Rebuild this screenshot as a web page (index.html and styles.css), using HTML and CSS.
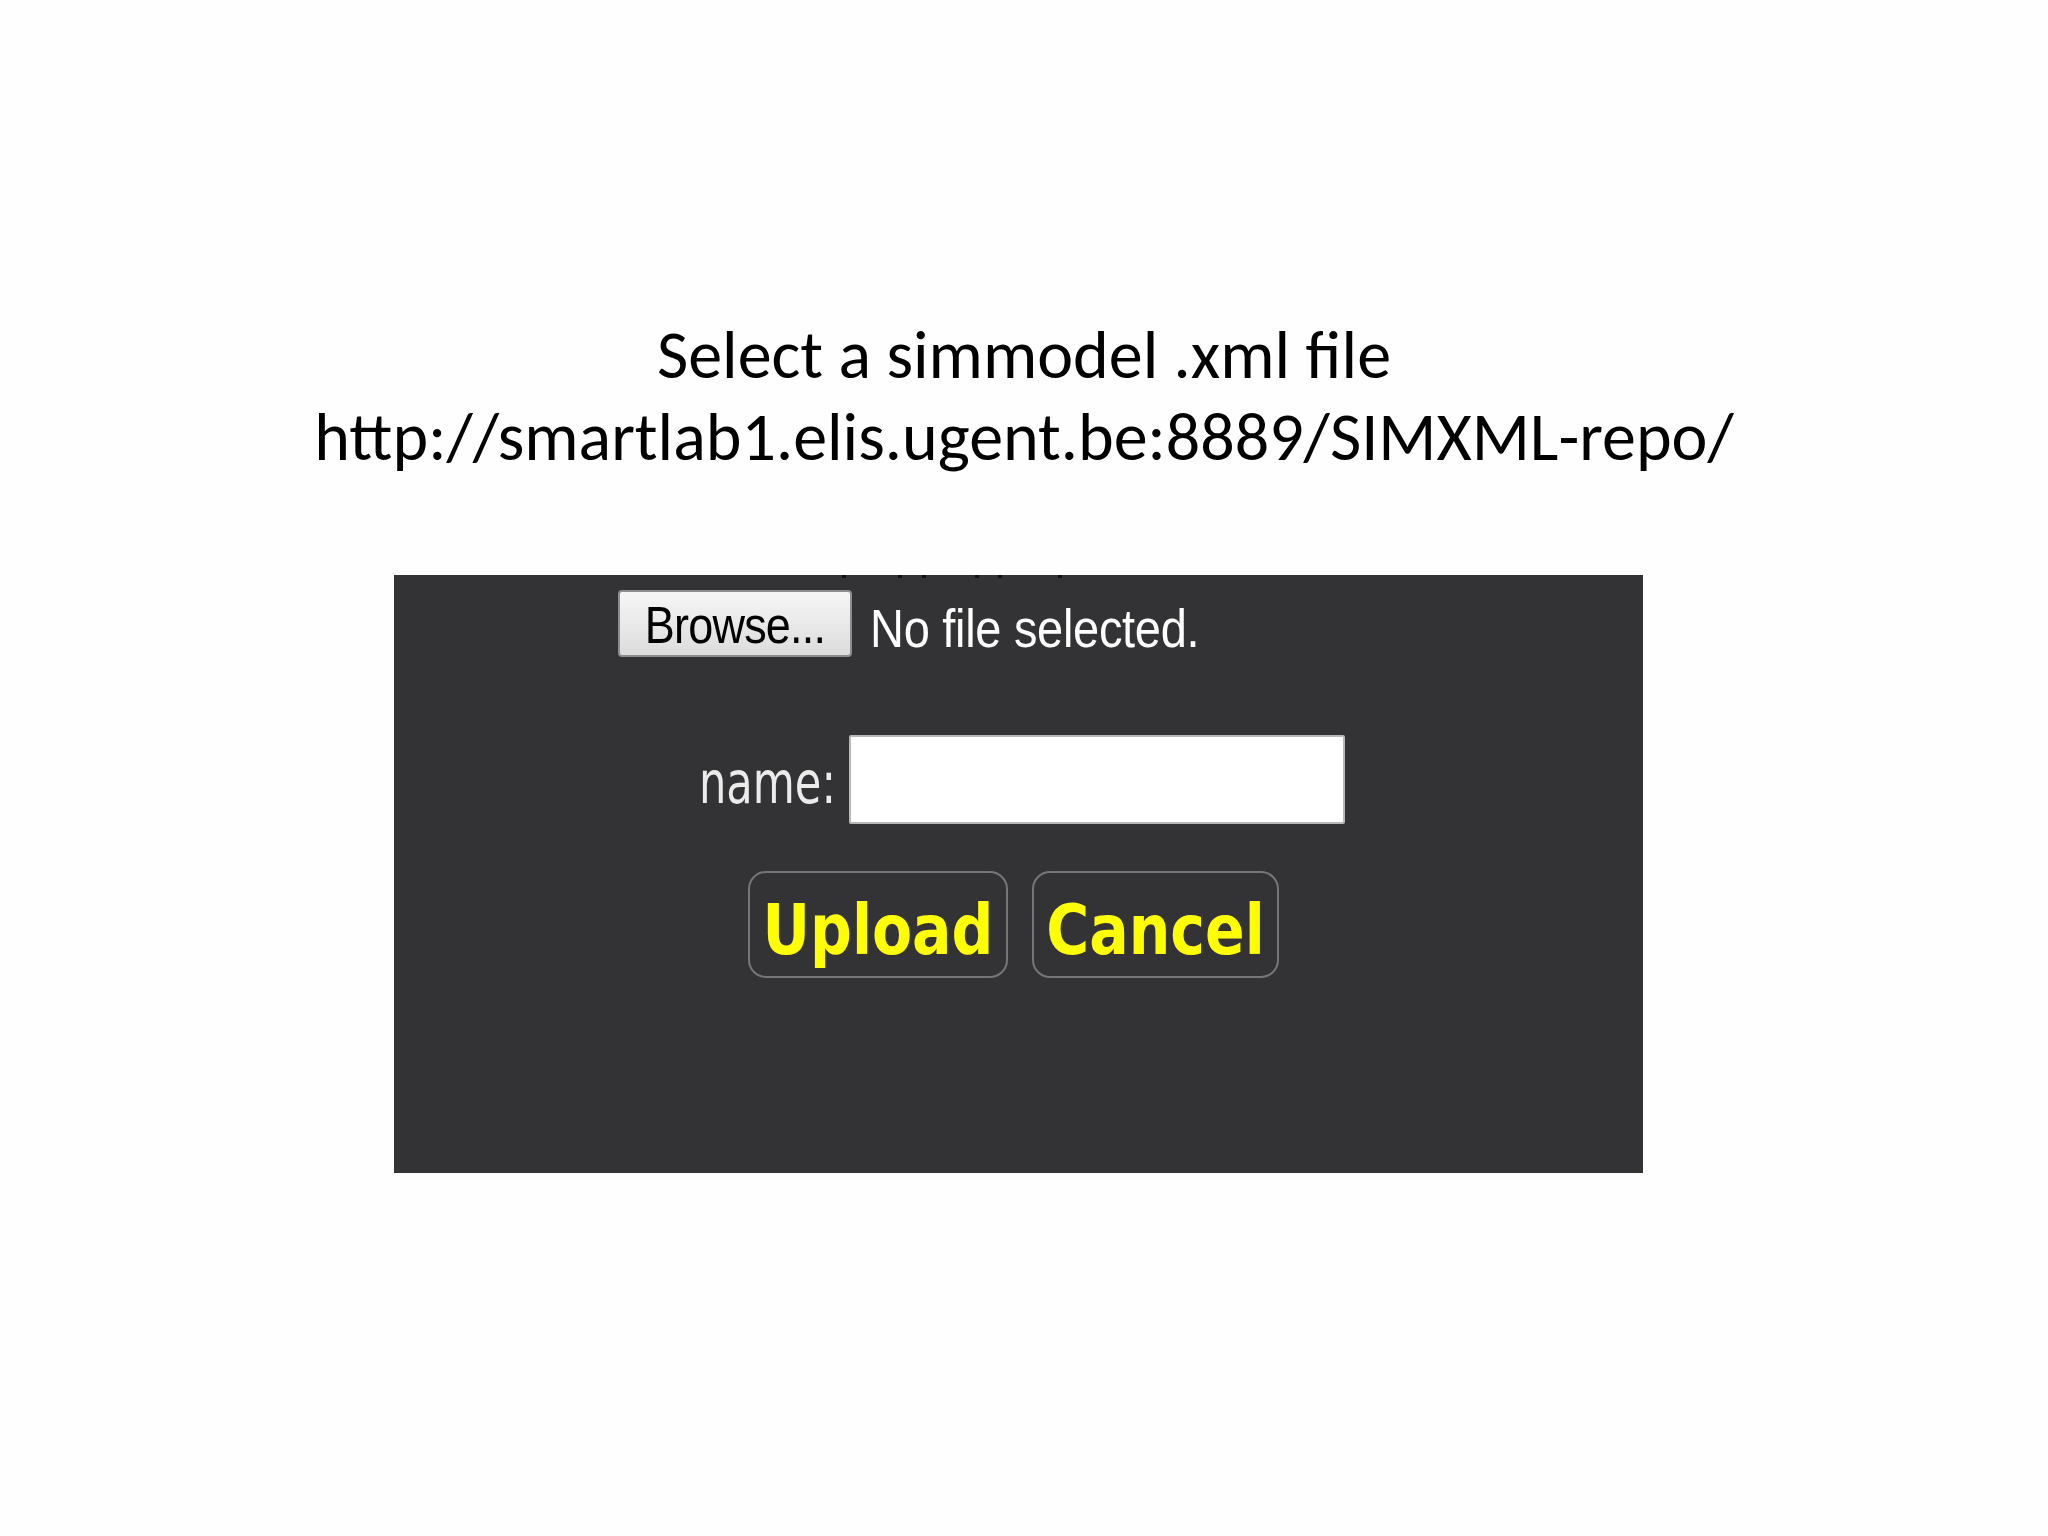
FILE: index.html
```html
<!DOCTYPE html>
<html lang="en">
<head>
<meta charset="utf-8">
<title>Select a simmodel .xml file</title>
<link rel="stylesheet" href="styles.css">
</head>
<body>
<main class="slide">
  <h1 class="title">
    <span class="title-line">Select a simmodel .xml file</span>
    <span class="title-line">http://smartlab1.elis.ugent.be:8889/SIMXML-repo/</span>
  </h1>

  <section class="shot">
    <div class="cut-line">
      <i></i><i></i><i></i><i></i><i></i><i></i>
    </div>
    <div class="file-row">
      <button class="browse" type="button"><span class="stretch">Browse...</span></button>
      <span class="file-status stretch">No file selected.</span>
    </div>
    <div class="name-row">
      <label class="name-label" for="model-name"><span class="stretch-lg">name:</span></label>
      <input class="name-input" id="model-name" type="text">
    </div>
    <div class="actions">
      <button class="action" type="button"><span class="stretch-sm">Upload</span></button>
      <button class="action" type="button"><span class="stretch-sm">Cancel</span></button>
    </div>
  </section>
</main>
</body>
</html>
```

FILE: styles.css
```css
html, body {
  margin: 0;
  padding: 0;
  background: #fefefe;
}

.slide {
  width: 2048px;
  height: 1536px;
  display: flex;
  flex-direction: column;
  align-items: stretch;
}

.title {
  margin: 0;
  padding-top: 314px;
  display: flex;
  flex-direction: column;
  align-items: center;
  font-family: Carlito, "Open Sans", sans-serif;
  font-weight: normal;
  font-size: 68px;
  line-height: 82px;
  color: #000;
}

/* the embedded form capture is vertically stretched */
.stretch,
.stretch-lg,
.stretch-sm {
  display: inline-block;
}
.stretch { transform: scaleY(1.14); }
.stretch-lg { transform: scaleY(1.24); }
.stretch-sm { transform: scaleY(1.06); }

.shot {
  margin: 97px 0 0 394px;
  width: 1249px;
  height: 598px;
  background: #333234;
  display: flex;
  flex-direction: column;
  position: relative;
}

/* descenders of a clipped line peeking over the top edge */
.cut-line {
  position: absolute;
  top: 0;
  left: 448px;
  display: flex;
}
.cut-line i {
  display: block;
  width: 4px;
  height: 3px;
  background: #111;
}
.cut-line i:nth-child(2) { margin-left: 52px; }
.cut-line i:nth-child(3) { margin-left: 20px; }
.cut-line i:nth-child(4) { margin-left: 49px; }
.cut-line i:nth-child(5) { margin-left: 19px; }
.cut-line i:nth-child(6) { margin-left: 56px; }

.file-row {
  display: flex;
  align-items: center;
  margin-top: 15px;
  padding-left: 224px;
  height: 67px;
}

.browse {
  width: 234px;
  height: 67px;
  box-sizing: border-box;
  border: 2px solid #8d8d8d;
  border-radius: 4px;
  background: linear-gradient(#f6f6f6, #e9e9e9 50%, #dcdcdc);
  font-family: "Liberation Sans", Arial, sans-serif;
  font-size: 45px;
  color: #000;
  padding: 5px 0 0;
  letter-spacing: -0.8px;
}

.file-status {
  margin-left: 18px;
  padding-top: 8px;
  font-family: "Liberation Sans", Arial, sans-serif;
  font-size: 47px;
  color: #fff;
  letter-spacing: -0.3px;
}

.name-row {
  display: flex;
  align-items: center;
  margin-top: 78px;
  padding-left: 303px;
  height: 89px;
}

.name-label {
  font-family: "DejaVu Sans", sans-serif;
  font-stretch: condensed;
  font-size: 48px;
  color: #ebebeb;
  margin-right: 13px;
  width: 139px;
  text-align: right;
  padding-top: 4px;
  white-space: nowrap;
}

.name-input {
  width: 496px;
  height: 89px;
  box-sizing: border-box;
  border: 2px solid #b8b8b8;
  border-radius: 2px;
  background: #fff;
  margin: 0;
}

.actions {
  display: flex;
  gap: 24px;
  margin-top: 47px;
  padding-left: 354px;
}

.action {
  height: 107px;
  box-sizing: border-box;
  border: 2px solid #767676;
  border-radius: 18px;
  background: #333234;
  color: #ffff00;
  font-family: "DejaVu Sans", sans-serif;
  font-stretch: condensed;
  font-weight: bold;
  font-size: 65px;
  padding: 12px 0 0;
  white-space: nowrap;
}
.action:first-child { width: 260px; }
.action:last-child { width: 247px; }
```
